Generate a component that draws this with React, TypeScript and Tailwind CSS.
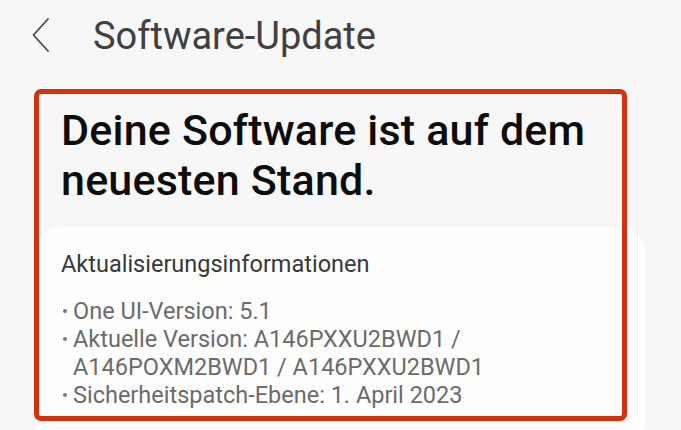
export default function App() {
  return (
    <div className="relative min-h-screen h-[430px] overflow-hidden bg-[#f7f7f7] font-['Roboto','Noto_Sans',sans-serif]">
      {/* Top bar */}
      <header className="flex items-center pt-[13px] h-[59px]">
        <div className="w-[93px] flex items-center pl-[31px] -mt-[2px]">
          <svg width="20" height="36" viewBox="0 0 20 36" fill="none" className="text-[#4a4a4a]">
            <path d="M17 2 L2.5 18 L17 34" stroke="currentColor" strokeWidth="1.8" strokeLinecap="round" strokeLinejoin="round" />
          </svg>
        </div>
        <h1 className="text-[38px] leading-[46px] text-[#404040]">Software-Update</h1>
      </header>

      {/* Status */}
      <div className="pl-[61px] pt-[46px]">
        <h2 className="text-[43px] leading-[50px] font-medium text-[#0d0d0d] tracking-[0.2px]">
          Deine Software ist auf dem
          <br />
          neuesten Stand.
        </h2>
      </div>

      {/* Update info card */}
      <section className="mx-[36px] mt-[22px] rounded-[26px] bg-[#fefefe] pt-[23px] pb-10 pl-[25px] pr-6">
        <h3 className="text-[23.5px] leading-[28px] text-[#383838]">Aktualisierungsinformationen</h3>
        <ul className="mt-[19px] text-[23.5px] leading-[28px] text-[#6b6b6b]">
          {[
            ['One UI-Version: 5.1'],
            ['Aktuelle Version: A146PXXU2BWD1 /', 'A146POXM2BWD1 / A146PXXU2BWD1'],
            ['Sicherheitspatch-Ebene: 1. April 2023'],
          ].map((lines, i) => (
            <li key={i} className="flex">
              <span className="w-[12px] shrink-0 pl-[2px] pt-[12px]">
                <span className="block w-[4px] h-[4px] rounded-full bg-[#7a7a7a]" />
              </span>
              <span>
                {lines.map((l, j) => (
                  <span key={j} className="block">{l}</span>
                ))}
              </span>
            </li>
          ))}
        </ul>
      </section>

      {/* Red highlight annotation */}
      <div className="absolute left-[34px] top-[89px] w-[593px] h-[332px] border-[5px] border-[#d3320f] rounded-[7px] pointer-events-none" />
    </div>
  );
}
